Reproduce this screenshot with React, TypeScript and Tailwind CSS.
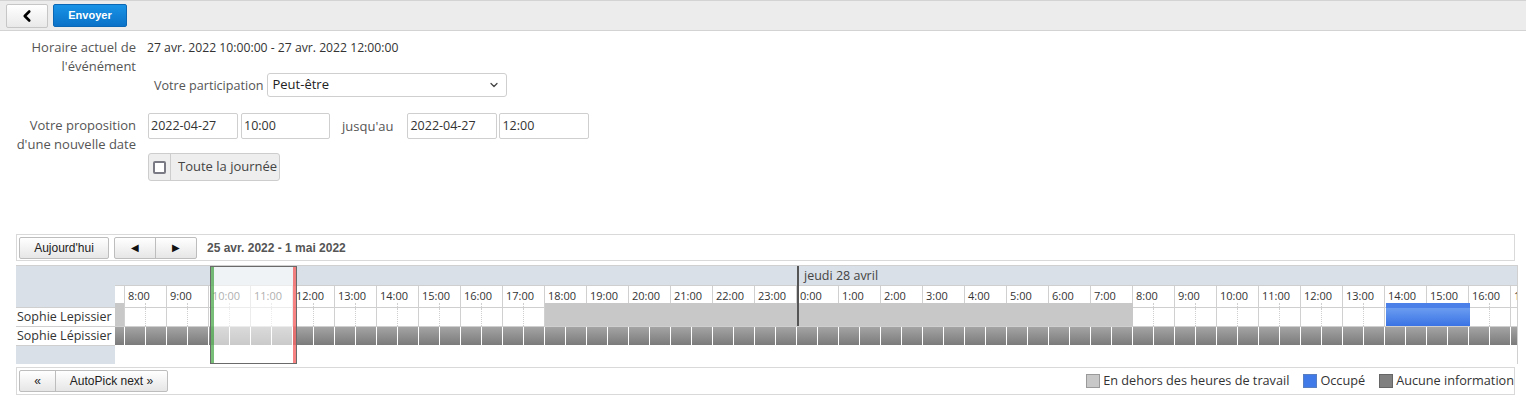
import React from 'react';
import { ChevronLeft, ChevronDown } from 'lucide-react';

const hours: number[] = [
  8, 9, 10, 11, 12, 13, 14, 15, 16, 17, 18, 19, 20, 21, 22, 23,
  0, 1, 2, 3, 4, 5, 6, 7, 8, 9, 10, 11, 12, 13, 14, 15, 16, 17,
];

// blocs positionnés à partir de l'origine de la zone horaire (x = 115, y = 266)
const blocks = [
  { left: 0, width: 9, kind: 'off' },
  { left: 430, width: 588, kind: 'off' },
  { left: 1271, width: 84, kind: 'busy' },
];

const label = 'text-[13px] leading-[19px] text-[#555]';

const Input: React.FC<{ value: string; w: string }> = ({ value, w }) => (
  <div className={`${w} h-[26px] border border-[#cfcfcf] rounded-[2px] bg-white px-[2px] flex items-center text-[12.5px] text-[#333]`}>
    {value}
  </div>
);

const App: React.FC = () => {
  return (
    <div className="w-[1526px] h-[413px] bg-white overflow-hidden font-['Open_Sans',sans-serif] text-[#333]">
      {/* barre du haut */}
      <div className="h-[31px] bg-[#ececec] border-t border-b border-[#d3d3d3] flex items-center gap-[5px] px-[6px]">
        <button className="w-[42px] h-[24px] rounded-[2px] border border-[#c6c6c6] bg-linear-to-b from-white to-[#e9e9e9] flex items-center justify-center">
          <ChevronLeft size={18} strokeWidth={3.5} className="text-black" />
        </button>
        <button className="w-[74px] h-[23px] rounded-[2px] border border-[#0b67b3] bg-linear-to-b from-[#1993e6] to-[#0a72c8] text-white text-[11px] font-bold font-['Liberation_Sans',sans-serif]">
          Envoyer
        </button>
      </div>

      {/* horaire actuel */}
      <div className="flex mt-[7px]">
        <div className={`w-[136px] text-right ${label}`}>
          Horaire actuel de
          <br />
          l'événément
        </div>
        <div className="ml-[11px]">
          <div className="text-[12.2px] leading-[19px] text-[#333]">
            27 avr. 2022 10:00:00 - 27 avr. 2022 12:00:00
          </div>
          <div className="flex items-center mt-[16px]">
            <span className="text-[12.6px] leading-[19px] text-[#555] ml-[7px] mr-[4px]">Votre participation</span>
            <div className="w-[240px] h-[24px] border border-[#cfcfcf] rounded-[3px] bg-white flex items-center justify-between pl-[4px] pr-[6px] text-[13px] text-[#222]">
              Peut-être
              <ChevronDown size={12} strokeWidth={2.5} className="text-[#444]" />
            </div>
          </div>
        </div>
      </div>

      {/* proposition */}
      <div className="flex mt-[16px]">
        <div className={`w-[136px] text-right pt-[3px] ${label}`}>
          Votre proposition
          <br />
          d'une nouvelle date
        </div>
        <div className="ml-[12px]">
          <div className="flex items-center">
            <Input value="2022-04-27" w="w-[90px]" />
            <div className="w-[3px]" />
            <Input value="10:00" w="w-[89px]" />
            <span className={`${label} ml-[12px] mr-[14px]`}>jusqu'au</span>
            <Input value="2022-04-27" w="w-[90px]" />
            <div className="w-[2px]" />
            <Input value="12:00" w="w-[90px]" />
          </div>
          <div className="mt-[14px] w-[132px] h-[28px] rounded-[3px] border border-[#cdcdcd] bg-[#eeeeee] flex items-center">
            <div className="w-[22px] h-full border-r border-[#cdcdcd] flex items-center justify-center">
              <div className="w-[13px] h-[13px] border-2 border-[#7a7a84] rounded-[2px] bg-white" />
            </div>
            <span className="ml-[7px] text-[13px] text-[#444]">Toute la journée</span>
          </div>
        </div>
      </div>

      {/* planificateur */}
      <div className="ml-[16px] mt-[53px] w-[1499px] h-[27px] border border-[#d9d9d9] flex items-center pl-[2px] font-['Liberation_Sans',sans-serif] text-[12px]">
        <button className="w-[90px] h-[22px] rounded-[2px] border border-[#bdbdbd] bg-linear-to-b from-white to-[#e6e6e6] text-[#222]">
          Aujourd'hui
        </button>
        <div className="ml-[5px] w-[83px] h-[22px] rounded-[2px] border border-[#bdbdbd] bg-linear-to-b from-white to-[#e6e6e6] flex text-[10px] text-[#111]">
          <div className="w-[41px] border-r border-[#bdbdbd] flex items-center justify-center">◀</div>
          <div className="flex-1 flex items-center justify-center">▶</div>
        </div>
        <span className="ml-[10px] font-bold text-[#555]">25 avr. 2022 - 1 mai 2022</span>
      </div>

      <div className="ml-[16px] mt-[4px] w-[1502px] h-[99px] border-t border-r border-[#d0d0d0] flex overflow-hidden">
        {/* noms */}
        <div className="w-[99px] shrink-0 bg-[#dae0e7] flex flex-col">
          <div className="h-[41px]" />
          <div className="h-[19px] bg-white border-t border-[#cfcfcf] text-[12.5px] leading-[18px] pl-[1px] whitespace-nowrap">
            Sophie Lepissier
          </div>
          <div className="h-[20px] bg-white border-t border-b border-[#cfcfcf] text-[12.5px] leading-[18px] pl-[1px] whitespace-nowrap">
            Sophie Lépissier
          </div>
        </div>

        {/* grille horaire */}
        <div className="relative flex-1 overflow-hidden">
          <div className="h-[20px] bg-[#dae0e7] border-b border-[#cfcfcf]" />
          <div className="flex">
            <div className="w-[9px] shrink-0 flex flex-col">
              <div className="h-[21px] bg-white" />
              <div className="h-[19px] border-t border-[#cfcfcf]" />
            </div>
            {hours.map((h, i) => (
              <div key={i} className="w-[42px] shrink-0 border-l border-[#d0d0d0] flex flex-col">
                <div className="h-[21px] relative text-[11px] leading-[17px] pl-[3px] pt-[1px] text-[#333] whitespace-nowrap overflow-hidden">
                  {h}:00
                  <div className="absolute left-[20px] bottom-0 h-[4px] border-l border-dotted border-[#cfcfcf]" />
                </div>
                <div className="h-[19px] border-t border-[#cfcfcf] relative">
                  <div className="absolute left-[20px] top-0 bottom-0 border-l border-dotted border-[#cfcfcf]" />
                </div>
              </div>
            ))}
          </div>
          <div className="flex h-[19px] border-t border-[#cfcfcf]">
            <div className="w-[9px] shrink-0 bg-linear-to-b from-[#a4a4a4] to-[#7b7b7b]" />
            {hours.flatMap((_, i) => [0, 1].map((k) => (
              <div key={`${i}-${k}`} className="w-[21px] shrink-0 border-l border-white bg-linear-to-b from-[#a4a4a4] to-[#7b7b7b]" />
            )))}
          </div>

          {/* hors heures / occupé */}
          {blocks.map((b, i) => (
            <div
              key={i}
              className={`absolute top-[37px] h-[23px] ${b.kind === 'off' ? 'bg-[#c8c8c8]' : 'bg-linear-to-b from-[#6b9cf0] to-[#3a73e4] border-t-[5px] border-[#4a80e8]'}`}
              style={{ left: b.left, width: b.width }}
            />
          ))}

          {/* séparateur de jour */}
          <div className="absolute left-[682px] top-0 w-[2px] h-[60px] bg-[#555]" />
          <div className="absolute left-[689px] top-0 h-[20px] leading-[19px] text-[12.5px] text-[#444]">jeudi 28 avril</div>

          {/* sélection */}
          <div className="absolute left-[95px] top-0 w-[87px] h-[98px] border border-[#6a6a6a] bg-white/60">
            <div className="absolute left-0 top-0 bottom-0 w-[3px] bg-[#2f9a2f]/65" />
            <div className="absolute right-0 top-0 bottom-0 w-[3px] bg-[#f01e1e]/55" />
          </div>
        </div>
      </div>

      {/* bas */}
      <div className="ml-[16px] mt-[3px] w-[1499px] h-[28px] border border-[#d9d9d9] flex items-center pl-[2px]">
        <div className="h-[22px] rounded-[2px] border border-[#bdbdbd] bg-linear-to-b from-white to-[#e6e6e6] flex font-['Liberation_Sans',sans-serif] text-[12px] text-[#222]">
          <div className="w-[36px] border-r border-[#bdbdbd] flex items-center justify-center">«</div>
          <div className="w-[111px] flex items-center justify-center">AutoPick next »</div>
        </div>
        <div className="ml-auto flex items-center text-[12.7px] text-[#333] pr-0">
          <div className="w-[14px] h-[14px] border border-[#9a9a9a] bg-[#c8c8c8]" />
          <span className="ml-[3px]">En dehors des heures de travail</span>
          <div className="ml-[14px] w-[14px] h-[14px] border border-[#5a7fc0] bg-[#3f7ae8]" />
          <span className="ml-[3px]">Occupé</span>
          <div className="ml-[14px] w-[14px] h-[14px] border border-[#666] bg-[#808080]" />
          <span className="ml-[3px]">Aucune information</span>
        </div>
      </div>
    </div>
  );
};

export default App;
